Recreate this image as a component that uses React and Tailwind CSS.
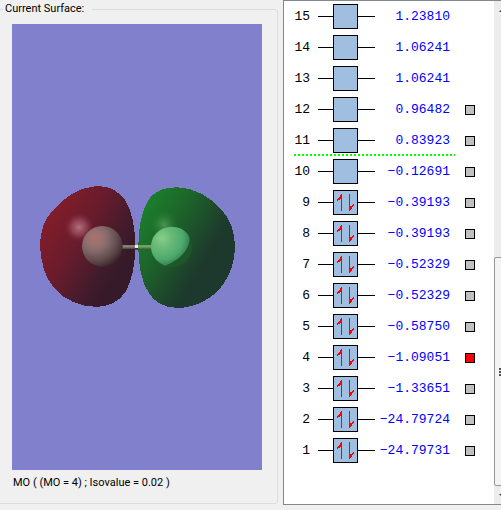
import { Fragment, useState } from 'react';

const ORBITALS = [
  { id: 15, energy: '1.23810' },
  { id: 14, energy: '1.06241' },
  { id: 13, energy: '1.06241' },
  { id: 12, energy: '0.96482', surface: true },
  { id: 11, energy: '0.83923', surface: true },
  { id: 10, energy: '−0.12691', surface: true },
  { id: 9, energy: '−0.39193', surface: true, filled: true },
  { id: 8, energy: '−0.39193', surface: true, filled: true },
  { id: 7, energy: '−0.52329', surface: true, filled: true },
  { id: 6, energy: '−0.52329', surface: true, filled: true },
  { id: 5, energy: '−0.58750', surface: true, filled: true },
  { id: 4, energy: '−1.09051', surface: true, filled: true },
  { id: 3, energy: '−1.33651', surface: true, filled: true },
  { id: 2, energy: '−24.79724', surface: true, filled: true },
  { id: 1, energy: '−24.79731', surface: true, filled: true },
];

function Electrons() {
  return (
    <svg viewBox="0 0 23 23" className="w-full h-full" shapeRendering="crispEdges" fill="#ff0000">
      <path d="M7 3h1v17h-1zM6 4h1v4h-1zM5 6h1v3h-1zM4 7h1v2h-1zM3 8h1v2h-1z" />
      <path d="M15 3h1v17h-1zM16 15h1v4h-1zM17 15h1v3h-1zM18 14h1v2h-1zM19 13h1v2h-1z" />
    </svg>
  );
}

function Surface() {
  return (
    <svg viewBox="0 0 250 446" className="block w-full bg-[#8080cc]" role="img" aria-label="Molecular orbital">
      <defs>
        <linearGradient id="red" gradientUnits="userSpaceOnUse" x1="75" y1="95" x2="300" y2="225">
          <stop offset="0" stopColor="#831c2a" />
          <stop offset="0.45" stopColor="#661c2c" />
          <stop offset="0.85" stopColor="#3f1b2b" />
          <stop offset="1" stopColor="#371a29" />
        </linearGradient>
        <linearGradient id="green" gradientUnits="userSpaceOnUse" x1="345" y1="105" x2="550" y2="230">
          <stop offset="0" stopColor="#1b7d2a" />
          <stop offset="0.4" stopColor="#1d642a" />
          <stop offset="0.85" stopColor="#1d412c" />
          <stop offset="1" stopColor="#1d382c" />
        </linearGradient>
        <radialGradient id="shine">
          <stop offset="0" stopColor="#b87287" stopOpacity="0.95" />
          <stop offset="0.5" stopColor="#a3596b" stopOpacity="0.6" />
          <stop offset="1" stopColor="#8a2a3a" stopOpacity="0" />
        </radialGradient>
        <radialGradient id="shineGreen">
          <stop offset="0" stopColor="#4f9a58" stopOpacity="0.9" />
          <stop offset="1" stopColor="#237c34" stopOpacity="0" />
        </radialGradient>
        <radialGradient id="atomLeft" cx="0.32" cy="0.3" r="0.75">
          <stop offset="0" stopColor="#aa706e" />
          <stop offset="0.2" stopColor="#9c726f" />
          <stop offset="0.4" stopColor="#866c6c" />
          <stop offset="0.7" stopColor="#664f50" />
          <stop offset="1" stopColor="#3c282c" />
        </radialGradient>
        <radialGradient id="atomRight" gradientUnits="userSpaceOnUse" cx="396" cy="190" r="105">
          <stop offset="0" stopColor="#86cf88" />
          <stop offset="0.25" stopColor="#6cbc7a" />
          <stop offset="0.6" stopColor="#4ea96f" />
          <stop offset="0.8" stopColor="#358051" />
          <stop offset="1" stopColor="#1f5c29" />
        </radialGradient>
        <linearGradient id="bond" x1="0" y1="0" x2="0" y2="1">
          <stop offset="0" stopColor="#7f7468" />
          <stop offset="0.4" stopColor="#8b8477" />
          <stop offset="1" stopColor="#4a3f3c" />
        </linearGradient>
        <linearGradient id="bondGreen" x1="0" y1="0" x2="0" y2="1">
          <stop offset="0" stopColor="#6a9a60" />
          <stop offset="0.4" stopColor="#7aa66c" />
          <stop offset="1" stopColor="#3a6338" />
        </linearGradient>
      </defs>
      <g transform="translate(18 151) scale(0.33333)">
        <path
          d="M30 208C31 170 42 135 66 109C102 66 148 36 200 33C244 32 266 51 285 75C306 106 316 160 316 215C315 270 306 317 286 352C265 382 233 395 200 396C150 394 105 377 72 339C45 308 31 260 30 208Z"
          fill="url(#red)"
          shapeRendering="crispEdges"
        />
        <ellipse cx="147" cy="157" rx="44" ry="44" fill="url(#shine)" />
        <path
          d="M325 218C325 160 332 109 360 68C382 42 410 37 443 37C493 38 544 66 578 108C602 137 615 170 615 218C614 260 602 296 579 329C549 369 500 398 443 399C402 398 376 382 358 357C333 321 325 265 325 218Z"
          fill="url(#green)"
          shapeRendering="crispEdges"
        />
        <ellipse cx="402" cy="148" rx="42" ry="42" fill="url(#shineGreen)" />
        <circle cx="425" cy="216" r="61" fill="#1f5c29" opacity="0.7" />
        <rect x="276" y="210" width="40" height="12" fill="url(#bond)" />
        <rect x="324" y="210" width="42" height="12" fill="url(#bondGreen)" />
        <rect x="315" y="210" width="9" height="9" fill="#efeff0" />
        <rect x="315" y="219" width="9" height="5" fill="#35303a" />
        <circle cx="217" cy="214" r="61" fill="url(#atomLeft)" />
        <path
          d="M425 155C450 155 469 166 478 186C481 214 461 250 405 272C379 262 363 239 363 215C363 181 391 155 425 155Z"
          fill="url(#atomRight)"
        />
      </g>
    </svg>
  );
}

function OrbitalRow({ orbital, selected, onSelect }) {
  return (
    <li className="flex items-center h-[31px]">
      <span className="w-[26px] text-right">{orbital.id}</span>
      <span className="ml-2 w-[15px] h-px bg-black" />
      <span className="w-[25px] h-[25px] shrink-0 border border-black bg-[#a0bee0]">
        {orbital.filled && <Electrons />}
      </span>
      <span className="w-[17px] h-px bg-black" />
      <span className="w-[75px] text-right text-[#0000ff] whitespace-nowrap">{orbital.energy}</span>
      {orbital.surface && (
        <input
          type="checkbox"
          aria-label={`Orbital ${orbital.id}`}
          checked={selected}
          onChange={onSelect}
          className="appearance-none ml-[15px] w-[10px] h-[10px] shrink-0 border border-black bg-[#c0c0c0] checked:bg-[#ff0000]"
        />
      )}
    </li>
  );
}

function ScrollBar() {
  return (
    <div className="w-[7px] shrink-0 flex flex-col overflow-hidden bg-[#ececec]">
      <button aria-label="Scroll up" className="h-[17px] w-[17px] shrink-0">
        <svg viewBox="0 0 17 17" className="w-[17px] h-[17px]" fill="#303030">
          <path d="M5 11L9 7L13 11Z" />
        </svg>
      </button>
      <div className="flex-1 flex flex-col justify-end">
        <div className="h-[229px] w-[17px] flex items-center border border-[#979797] rounded-xs bg-[#f3f3f3]">
          <svg viewBox="0 0 15 8" className="w-[15px] h-2" fill="#505050" shapeRendering="crispEdges">
            <path d="M4 0h8v2H4zM4 3h8v2H4zM4 6h8v2H4z" />
          </svg>
        </div>
      </div>
      <button aria-label="Scroll down" className="h-[18px] w-[17px] shrink-0">
        <svg viewBox="0 0 17 17" className="w-[17px] h-[17px]" fill="#303030">
          <path d="M5 7L9 11L13 7Z" />
        </svg>
      </button>
    </div>
  );
}

export default function App() {
  const [selected, setSelected] = useState(4);

  return (
    <div className="min-h-screen flex items-stretch pb-[5px] bg-[#f0f0f0] text-black overflow-hidden">
      {/* Current surface */}
      <fieldset className="w-[278px] shrink min-w-0 pb-2 my-px border border-l-0 border-[#d5dfe5] rounded-r-[3px] font-[Roboto,sans-serif] text-[11px] leading-4">
        <legend className="ml-[3px] pl-[2px] pr-2">Current Surface:</legend>
        <div className="mt-[7px] pl-3 pr-[15px]">
          <Surface />
          <p className="mt-[5px] pl-px whitespace-nowrap">MO ( (MO = 4) ; Isovalue = 0.02 )</p>
        </div>
      </fieldset>

      {/* Orbital energies */}
      <section className="ml-[5px] flex-1 flex border border-r-0 border-[#828790] bg-white">
        <ul className="flex-1 font-['Liberation_Mono',monospace] text-[13px] leading-4">
          {ORBITALS.map(orbital => (
            <Fragment key={orbital.id}>
              <OrbitalRow
                orbital={orbital}
                selected={selected === orbital.id}
                onSelect={() => setSelected(orbital.id)}
              />
              {/* HOMO / LUMO divider */}
              {orbital.id === 11 && (
                <li
                  aria-hidden="true"
                  className="h-[2px] -mt-[2px] ml-[10px] mr-[39px] bg-[repeating-linear-gradient(to_right,#00ff00_0px,#00ff00_2px,transparent_2px,transparent_4px)]"
                />
              )}
            </Fragment>
          ))}
        </ul>
        <ScrollBar />
      </section>
    </div>
  );
}
